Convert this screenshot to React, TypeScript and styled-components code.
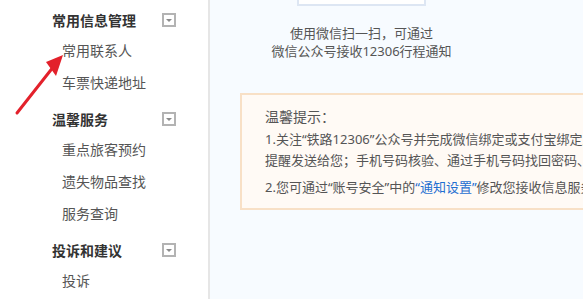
import styled, { createGlobalStyle } from "styled-components"

const Global = createGlobalStyle`
  html, body {
    margin: 0;
    padding: 0;
    overflow: hidden;
    background: #f7fbff;
  }
  body {
    font-family: "Noto Sans", "Noto Sans CJK SC", sans-serif;
    color: #333;
  }
`

const Page = styled.div`
  position: relative;
  display: flex;
  width: 583px;
  height: 299px;
  overflow: hidden;
`

const Sidebar = styled.div`
  width: 208px;
  flex-shrink: 0;
  background: #fff;
  border-right: 2px solid #e6e6e6;
  padding-top: 5px;
  box-sizing: content-box;
`

const Group = styled.div`
  & + & {
    margin-top: 5px;
  }
`

const GroupHead = styled.div`
  display: flex;
  align-items: center;
  justify-content: space-between;
  height: 30px;
  padding-left: 52px;
  width: 124px;
  font-size: 14px;
  font-weight: bold;
  color: #333;
`

const Toggle = styled.span`
  width: 10px;
  height: 10px;
  border: 2px solid #b3b3b3;
  background: #fff;
  display: flex;
  align-items: center;
  justify-content: center;
  &::after {
    content: "";
    border-left: 3px solid transparent;
    border-right: 3px solid transparent;
    border-top: 3px solid #8a8a8a;
  }
`

const Item = styled.div`
  height: 32px;
  line-height: 32px;
  padding-left: 62px;
  font-size: 14px;
  color: #555;
`

const Main = styled.div`
  flex: 1;
  padding-left: 30px;
  min-width: 0;
`

const QrBlock = styled.div`
  width: 243px;
  display: flex;
  flex-direction: column;
  align-items: center;
`

const QrBox = styled.div`
  width: 125px;
  height: 4px;
  border: 2px solid #dde6f3;
  border-top: none;
  background: #fff;
`

const QrText = styled.div`
  margin-top: 18px;
  font-size: 13px;
  line-height: 18px;
  color: #555;
  text-align: center;
  white-space: nowrap;
`

const Notice = styled.div`
  margin-top: 33px;
  width: 420px;
  height: 102px;
  border: 2px solid #f8e0c6;
  background: #fffaf5;
  padding: 11px 0 0 23px;
  box-sizing: content-box;
  color: #555;
  white-space: nowrap;
`

const NoticeTitle = styled.div`
  font-size: 14px;
  line-height: 22px;
  margin-bottom: 1px;
`

const NoticeLine = styled.div<{ $gap?: number }>`
  font-size: 13px;
  line-height: 21px;
  margin-top: ${(p) => p.$gap ?? 0}px;
`

const Link = styled.span`
  color: #1f6fd1;
`

const Arrow = styled.svg`
  position: absolute;
  left: 0;
  top: 0;
  pointer-events: none;
`

const groups = [
  { title: "常用信息管理", items: ["常用联系人", "车票快递地址"] },
  { title: "温馨服务", items: ["重点旅客预约", "遗失物品查找", "服务查询"] },
  { title: "投诉和建议", items: ["投诉"] },
]

export default function App() {
  return (
    <Page>
      <Global />
      <Sidebar>
        {groups.map((g) => (
          <Group key={g.title}>
            <GroupHead>
              {g.title}
              <Toggle />
            </GroupHead>
            {g.items.map((it) => (
              <Item key={it}>{it}</Item>
            ))}
          </Group>
        ))}
      </Sidebar>
      <Main>
        <QrBlock>
          <QrBox />
          <QrText>
            使用微信扫一扫，可通过
            <br />
            微信公众号接收12306行程通知
          </QrText>
        </QrBlock>
        <Notice>
          <NoticeTitle>温馨提示：</NoticeTitle>
          <NoticeLine>1.关注“铁路12306”公众号并完成微信绑定或支付宝绑定后，我们会将购票、退票、改签等信息</NoticeLine>
          <NoticeLine>提醒发送给您；手机号码核验、通过手机号码找回密码、注册等需要时会向您发送验证码。</NoticeLine>
          <NoticeLine $gap={6}>
            2.您可通过“账号安全”中的<Link>“通知设置”</Link>修改您接收信息服务的方式。
          </NoticeLine>
        </Notice>
      </Main>
      <Arrow width="80" height="130" viewBox="0 0 80 130">
        <line x1="17" y1="113" x2="54" y2="66" stroke="#e3212b" strokeWidth="3" strokeLinecap="round" />
        <polygon points="63,55 46,62 56,76" fill="#e3212b" />
      </Arrow>
    </Page>
  )
}
